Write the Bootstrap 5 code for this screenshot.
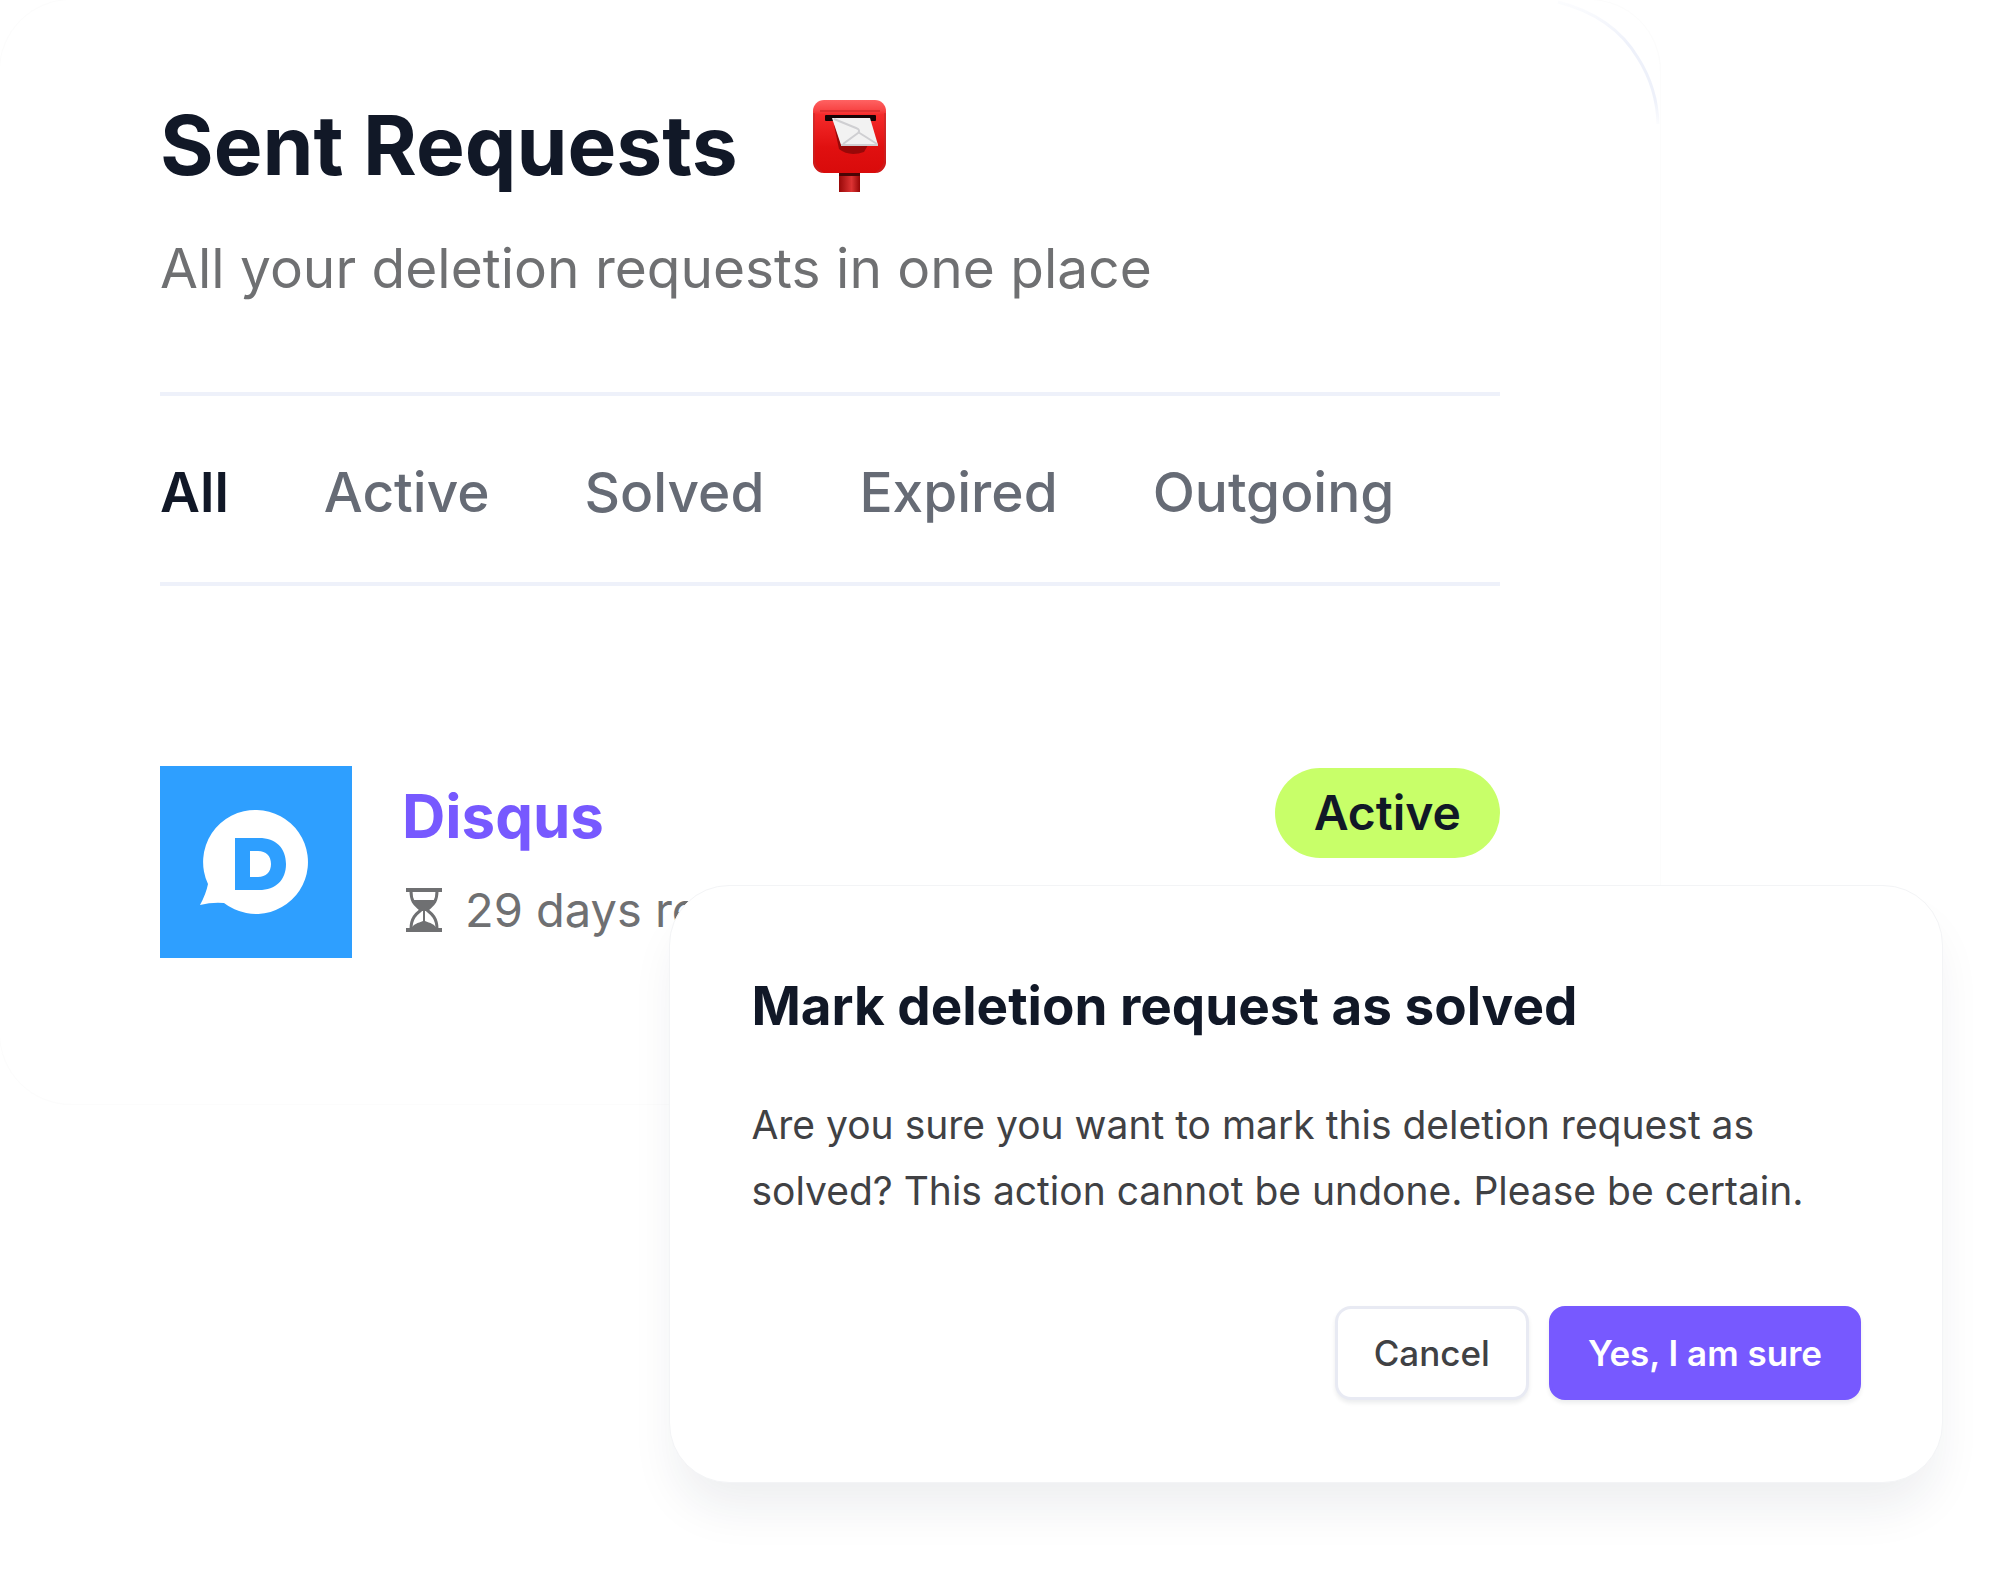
<!DOCTYPE html>
<html lang="en">
<head>
<meta charset="utf-8">
<meta name="viewport" content="width=device-width, initial-scale=1">
<title>Sent Requests</title>
<link href="https://cdn.jsdelivr.net/npm/bootstrap@5.3.0/dist/css/bootstrap.min.css" rel="stylesheet">
<style>
  :root { --ink: #111827; --violet: #7759ff; --rule: #eef1fa; }
  body { font-family: Inter, "Liberation Sans", sans-serif; background: #fff; min-height: 100vh; }
  .requests-panel { width: calc(100% - 328px); padding: 96px 160px 146px; border-radius: 72px; border: 1px solid #fcfcfc; margin-top: -1px; margin-left: -1px; }
  .panel-curve { top: 0; right: 0; width: 112px; height: 126px; }
  .page-title { font-size: 82px; line-height: 100px; font-weight: 700; color: var(--ink); gap: 74px; }
  .page-sub { font-size: 55px; line-height: 68px; color: #6f7072; margin-top: 38px; margin-bottom: 90px; }
  .filter-tabs { border-top: 4px solid var(--rule); border-bottom: 4px solid var(--rule); padding: 62px 0 56px; gap: 95px; }
  .filter-tabs .nav-link { padding: 0; font-size: 55px; line-height: 68px; font-weight: 500; color: #666b75; }
  .filter-tabs .nav-link.active { color: var(--ink); font-weight: 600; }
  .request-item { margin-top: 180px; gap: 50px; }
  .request-name { font-size: 60px; line-height: 76px; font-weight: 700; color: var(--violet); }
  .request-due { font-size: 47px; line-height: 60px; color: #6f7072; margin-top: 26px; gap: 23px; padding-left: 4px; }
  .status-pill { font-size: 48px; line-height: 58px; font-weight: 600; color: var(--ink); background: #c8ff69; padding: 16px 39px; margin-top: 2px; }
  .confirm-box { top: 885px; right: 47px; width: 64%; padding: 86px 81px 82px; border-radius: 60px; background: #fff; border: 1px solid #f3f4f6; box-shadow: 0 32px 48px -8px rgba(30, 41, 70, .08); }
  .confirm-title { font-size: 53px; line-height: 68px; font-weight: 700; color: var(--ink); }
  .confirm-text { font-size: 39px; line-height: 66px; color: #404144; margin: 52px 0 82px; }
  .confirm-actions { gap: 20px; }
  .act-btn { font-size: 35px; line-height: 44px; font-weight: 500; padding: 22px 36px; border-width: 3px; border-radius: 16px; box-shadow: 0 3px 4px rgba(17, 24, 39, .08); }
  .act-cancel { color: #404144; background: #fff; border-color: #e8eaf3; }
  .act-yes { color: #fff; font-weight: 600; background: var(--violet); border-color: var(--violet); }
</style>
</head>
<body class="position-relative">
<main class="requests-panel position-relative">
  <svg class="panel-curve position-absolute" viewBox="0 0 112 126" aria-hidden="true">
    <defs><linearGradient id="fade" x1="0" y1="0" x2="0" y2="1"><stop offset="0" stop-color="#eef1fa" stop-opacity=".2"/><stop offset=".35" stop-color="#eef1fa"/><stop offset=".8" stop-color="#eef1fa"/><stop offset="1" stop-color="#eef1fa" stop-opacity=".2"/></linearGradient></defs>
    <path d="M10 2Q65 16 90 58Q109 88 110 124" fill="none" stroke="url(#fade)" stroke-width="3"/>
  </svg>
  <h1 class="page-title d-flex align-items-center mb-0">Sent Requests
    <svg width="76" height="94" viewBox="0 0 76 94" role="img" aria-label="Postbox">
      <defs>
        <linearGradient id="red" x1="0" y1="0" x2="0" y2="1"><stop offset="0" stop-color="#ff6262"/><stop offset=".14" stop-color="#f84444"/><stop offset=".2" stop-color="#f52a2a"/><stop offset=".65" stop-color="#e01010"/><stop offset="1" stop-color="#d90b0b"/></linearGradient>
        <linearGradient id="pole" x1="0" y1="0" x2="1" y2="0"><stop offset="0" stop-color="#980808"/><stop offset=".6" stop-color="#d33"/><stop offset="1" stop-color="#960606"/></linearGradient>
      </defs>
      <rect x="27" y="70" width="21" height="23" fill="url(#pole)"/>
      <rect x="27" y="72" width="21" height="5" fill="#4a0505"/>
      <rect x="1" y="1" width="73" height="73" rx="11" fill="url(#red)"/>
      <path d="M2 14v48q2 9 8 11M73 14v48q-2 9-8 11" fill="none" stroke="#b92b2b" stroke-width="2" opacity=".5"/>
      <path d="M8 12h60" stroke="#dc3030" stroke-width="2"/>
      <rect x="13" y="16" width="51" height="6" rx="1" fill="#160305"/>
      <path d="M22 26l5 24q10 8 25 3l4-7z" fill="#980808"/>
      <path d="M20 19h38l8 27H29z" fill="#f2f2f2"/>
      <path d="M22 20l22 9q5 2 2 5L31 45M46 33l19 12M29 46h37" fill="none" stroke="#cfcfd2" stroke-width="2"/>
    </svg>
  </h1>
  <p class="page-sub">All your deletion requests in one place</p>

  <nav class="nav filter-tabs flex-nowrap" aria-label="Request status">
    <a class="nav-link active" aria-current="page" href="#all">All</a>
    <a class="nav-link" href="#active">Active</a>
    <a class="nav-link" href="#solved">Solved</a>
    <a class="nav-link" href="#expired">Expired</a>
    <a class="nav-link" href="#outgoing">Outgoing</a>
  </nav>

  <article class="request-item d-flex align-items-start">
    <svg class="flex-shrink-0" width="192" height="192" viewBox="0 0 192 192" role="img" aria-label="Disqus logo">
      <path fill="#2e9fff" d="M0 0h192v192H0z"/>
      <path fill="#fff" d="M97 44a52 52 0 1 1-33 93q-12-1-24 2 6-11 8-21A52 52 0 0 1 97 44z"/>
      <path fill="#2e9fff" fill-rule="evenodd" d="M75 72h24c17 0 27 10 27 26s-10 26-27 26H75zm15 13v26h8c8 0 13-5 13-13s-5-13-13-13z"/>
    </svg>
    <div class="flex-grow-1 pt-2 mt-1">
      <h2 class="request-name mb-0">Disqus</h2>
      <div class="request-due d-flex align-items-center text-nowrap">
        <svg width="36" height="44" viewBox="0 0 36 44" aria-hidden="true">
          <path d="M0 2h36M0 42h36" stroke="#6f7072" stroke-width="4"/>
          <path d="M5 3c0 12 5 14 10 19C10 26 5 30 5 41M31 3c0 12-5 14-10 19 5 4 10 8 10 19" fill="none" stroke="#6f7072" stroke-width="3"/>
          <path d="M6 12h24c-2 6-7 8-9 11h-6C13 20 8 18 6 12zM5 41c2-5 7-6 12-8V23h2v10c5 2 10 3 12 8z" fill="#6f7072"/>
        </svg>
        <span>29 days remaining</span>
      </div>
    </div>
    <span class="status-pill rounded-pill">Active</span>
  </article>
</main>

<section class="confirm-box position-absolute" role="dialog" aria-labelledby="confirmTitle" aria-describedby="confirmText">
  <h2 class="confirm-title mb-0" id="confirmTitle">Mark deletion request as solved</h2>
  <p class="confirm-text" id="confirmText">Are you sure you want to mark this deletion request as solved? This action cannot be undone. Please be certain.</p>
  <div class="confirm-actions d-flex justify-content-end">
    <button type="button" class="btn act-btn act-cancel">Cancel</button>
    <button type="button" class="btn act-btn act-yes">Yes, I am sure</button>
  </div>
</section>
<script src="https://cdn.jsdelivr.net/npm/bootstrap@5.3.0/dist/js/bootstrap.bundle.min.js"></script>
</body>
</html>
